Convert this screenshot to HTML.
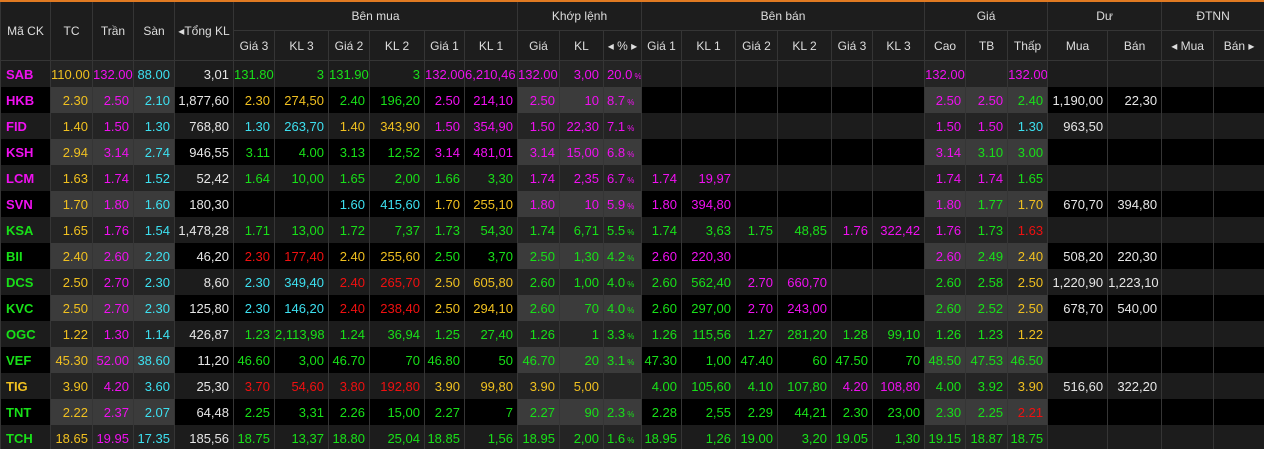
<!DOCTYPE html>
<html><head><meta charset="utf-8"><style>
html,body{margin:0;padding:0;background:#000;width:1264px;height:449px;overflow:hidden}
body{border-top:2px solid #e07a22;box-sizing:border-box}
table{border-collapse:collapse;table-layout:fixed;width:1264px;font-family:"Liberation Sans",sans-serif}
td,th{padding:0 4px 0 0;overflow:hidden;white-space:nowrap;border-left:1px solid #353535;border-right:1px solid #353535}
th{background:#1d1d1d;color:#ddd;font-weight:normal;font-size:12px;text-align:center;padding:0;border-bottom:1px solid #353535}
tr.h1 th{height:28px}tr.h2 th{height:29px}
td{height:26px;font-size:13px;text-align:right}
tr.o td{background:#1c1c1c}tr.e td{background:#000}
tr.o td.h{background:#242424}tr.e td.h{background:#3b3b3b}
td.n{text-align:left;padding-left:5px;font-weight:bold;font-size:13px}
td.p{text-align:left;padding-left:3px}
td.p small{font-size:8px}
.y{color:#f0c020}.m{color:#f010f0}.c{color:#3de0f0}.g{color:#18e018}.r{color:#f01010}.w{color:#e6e6e6}
</style></head><body>
<table>
<colgroup><col style="width:50px"><col style="width:42px"><col style="width:41px"><col style="width:41px"><col style="width:59px"><col style="width:41px"><col style="width:54px"><col style="width:41px"><col style="width:55px"><col style="width:40px"><col style="width:53px"><col style="width:42px"><col style="width:44px"><col style="width:38px"><col style="width:40px"><col style="width:54px"><col style="width:42px"><col style="width:54px"><col style="width:41px"><col style="width:52px"><col style="width:41px"><col style="width:42px"><col style="width:40px"><col style="width:60px"><col style="width:54px"><col style="width:52px"><col style="width:51px"></colgroup>
<tr class="h1"><th rowspan="2">Mã CK</th><th rowspan="2">TC</th><th rowspan="2">Trần</th><th rowspan="2">Sàn</th><th rowspan="2">◂Tổng KL</th><th colspan="6">Bên mua</th><th colspan="3">Khớp lệnh</th><th colspan="6">Bên bán</th><th colspan="3">Giá</th><th colspan="2">Dư</th><th colspan="2">ĐTNN</th></tr>
<tr class="h2"><th>Giá 3</th><th>KL 3</th><th>Giá 2</th><th>KL 2</th><th>Giá 1</th><th>KL 1</th><th>Giá</th><th>KL</th><th>◂ % ▸</th><th>Giá 1</th><th>KL 1</th><th>Giá 2</th><th>KL 2</th><th>Giá 3</th><th>KL 3</th><th>Cao</th><th>TB</th><th>Thấp</th><th>Mua</th><th>Bán</th><th>◂ Mua</th><th>Bán ▸</th></tr>
<tr class="o"><td class="n m">SAB</td><td class="h y">110.00</td><td class="h m">132.00</td><td class="h c">88.00</td><td class="w">3,01</td><td class="g">131.80</td><td class="g">3</td><td class="g">131.90</td><td class="g">3</td><td class="m">132.00</td><td class="m">6,210,46</td><td class="h m">132.00</td><td class="h m">3,00</td><td class="h p m">20.0<small> %</small></td><td></td><td></td><td></td><td></td><td></td><td></td><td class="h m">132.00</td><td class="h"></td><td class="h m">132.00</td><td></td><td></td><td></td><td></td></tr>
<tr class="e"><td class="n m">HKB</td><td class="h y">2.30</td><td class="h m">2.50</td><td class="h c">2.10</td><td class="w">1,877,60</td><td class="y">2.30</td><td class="y">274,50</td><td class="g">2.40</td><td class="g">196,20</td><td class="m">2.50</td><td class="m">214,10</td><td class="h m">2.50</td><td class="h m">10</td><td class="h p m">8.7<small> %</small></td><td></td><td></td><td></td><td></td><td></td><td></td><td class="h m">2.50</td><td class="h m">2.50</td><td class="h g">2.40</td><td class="w">1,190,00</td><td class="w">22,30</td><td></td><td></td></tr>
<tr class="o"><td class="n m">FID</td><td class="h y">1.40</td><td class="h m">1.50</td><td class="h c">1.30</td><td class="w">768,80</td><td class="c">1.30</td><td class="c">263,70</td><td class="y">1.40</td><td class="y">343,90</td><td class="m">1.50</td><td class="m">354,90</td><td class="h m">1.50</td><td class="h m">22,30</td><td class="h p m">7.1<small> %</small></td><td></td><td></td><td></td><td></td><td></td><td></td><td class="h m">1.50</td><td class="h m">1.50</td><td class="h c">1.30</td><td class="w">963,50</td><td></td><td></td><td></td></tr>
<tr class="e"><td class="n m">KSH</td><td class="h y">2.94</td><td class="h m">3.14</td><td class="h c">2.74</td><td class="w">946,55</td><td class="g">3.11</td><td class="g">4.00</td><td class="g">3.13</td><td class="g">12,52</td><td class="m">3.14</td><td class="m">481,01</td><td class="h m">3.14</td><td class="h m">15,00</td><td class="h p m">6.8<small> %</small></td><td></td><td></td><td></td><td></td><td></td><td></td><td class="h m">3.14</td><td class="h g">3.10</td><td class="h g">3.00</td><td></td><td></td><td></td><td></td></tr>
<tr class="o"><td class="n m">LCM</td><td class="h y">1.63</td><td class="h m">1.74</td><td class="h c">1.52</td><td class="w">52,42</td><td class="g">1.64</td><td class="g">10,00</td><td class="g">1.65</td><td class="g">2,00</td><td class="g">1.66</td><td class="g">3,30</td><td class="h m">1.74</td><td class="h m">2,35</td><td class="h p m">6.7<small> %</small></td><td class="m">1.74</td><td class="m">19,97</td><td></td><td></td><td></td><td></td><td class="h m">1.74</td><td class="h m">1.74</td><td class="h g">1.65</td><td></td><td></td><td></td><td></td></tr>
<tr class="e"><td class="n m">SVN</td><td class="h y">1.70</td><td class="h m">1.80</td><td class="h c">1.60</td><td class="w">180,30</td><td></td><td></td><td class="c">1.60</td><td class="c">415,60</td><td class="y">1.70</td><td class="y">255,10</td><td class="h m">1.80</td><td class="h m">10</td><td class="h p m">5.9<small> %</small></td><td class="m">1.80</td><td class="m">394,80</td><td></td><td></td><td></td><td></td><td class="h m">1.80</td><td class="h g">1.77</td><td class="h y">1.70</td><td class="w">670,70</td><td class="w">394,80</td><td></td><td></td></tr>
<tr class="o"><td class="n g">KSA</td><td class="h y">1.65</td><td class="h m">1.76</td><td class="h c">1.54</td><td class="w">1,478,28</td><td class="g">1.71</td><td class="g">13,00</td><td class="g">1.72</td><td class="g">7,37</td><td class="g">1.73</td><td class="g">54,30</td><td class="h g">1.74</td><td class="h g">6,71</td><td class="h p g">5.5<small> %</small></td><td class="g">1.74</td><td class="g">3,63</td><td class="g">1.75</td><td class="g">48,85</td><td class="m">1.76</td><td class="m">322,42</td><td class="h m">1.76</td><td class="h g">1.73</td><td class="h r">1.63</td><td></td><td></td><td></td><td></td></tr>
<tr class="e"><td class="n g">BII</td><td class="h y">2.40</td><td class="h m">2.60</td><td class="h c">2.20</td><td class="w">46,20</td><td class="r">2.30</td><td class="r">177,40</td><td class="y">2.40</td><td class="y">255,60</td><td class="g">2.50</td><td class="g">3,70</td><td class="h g">2.50</td><td class="h g">1,30</td><td class="h p g">4.2<small> %</small></td><td class="m">2.60</td><td class="m">220,30</td><td></td><td></td><td></td><td></td><td class="h m">2.60</td><td class="h g">2.49</td><td class="h y">2.40</td><td class="w">508,20</td><td class="w">220,30</td><td></td><td></td></tr>
<tr class="o"><td class="n g">DCS</td><td class="h y">2.50</td><td class="h m">2.70</td><td class="h c">2.30</td><td class="w">8,60</td><td class="c">2.30</td><td class="c">349,40</td><td class="r">2.40</td><td class="r">265,70</td><td class="y">2.50</td><td class="y">605,80</td><td class="h g">2.60</td><td class="h g">1,00</td><td class="h p g">4.0<small> %</small></td><td class="g">2.60</td><td class="g">562,40</td><td class="m">2.70</td><td class="m">660,70</td><td></td><td></td><td class="h g">2.60</td><td class="h g">2.58</td><td class="h y">2.50</td><td class="w">1,220,90</td><td class="w">1,223,10</td><td></td><td></td></tr>
<tr class="e"><td class="n g">KVC</td><td class="h y">2.50</td><td class="h m">2.70</td><td class="h c">2.30</td><td class="w">125,80</td><td class="c">2.30</td><td class="c">146,20</td><td class="r">2.40</td><td class="r">238,40</td><td class="y">2.50</td><td class="y">294,10</td><td class="h g">2.60</td><td class="h g">70</td><td class="h p g">4.0<small> %</small></td><td class="g">2.60</td><td class="g">297,00</td><td class="m">2.70</td><td class="m">243,00</td><td></td><td></td><td class="h g">2.60</td><td class="h g">2.52</td><td class="h y">2.50</td><td class="w">678,70</td><td class="w">540,00</td><td></td><td></td></tr>
<tr class="o"><td class="n g">OGC</td><td class="h y">1.22</td><td class="h m">1.30</td><td class="h c">1.14</td><td class="w">426,87</td><td class="g">1.23</td><td class="g">2,113,98</td><td class="g">1.24</td><td class="g">36,94</td><td class="g">1.25</td><td class="g">27,40</td><td class="h g">1.26</td><td class="h g">1</td><td class="h p g">3.3<small> %</small></td><td class="g">1.26</td><td class="g">115,56</td><td class="g">1.27</td><td class="g">281,20</td><td class="g">1.28</td><td class="g">99,10</td><td class="h g">1.26</td><td class="h g">1.23</td><td class="h y">1.22</td><td></td><td></td><td></td><td></td></tr>
<tr class="e"><td class="n g">VEF</td><td class="h y">45.30</td><td class="h m">52.00</td><td class="h c">38.60</td><td class="w">11,20</td><td class="g">46.60</td><td class="g">3,00</td><td class="g">46.70</td><td class="g">70</td><td class="g">46.80</td><td class="g">50</td><td class="h g">46.70</td><td class="h g">20</td><td class="h p g">3.1<small> %</small></td><td class="g">47.30</td><td class="g">1,00</td><td class="g">47.40</td><td class="g">60</td><td class="g">47.50</td><td class="g">70</td><td class="h g">48.50</td><td class="h g">47.53</td><td class="h g">46.50</td><td></td><td></td><td></td><td></td></tr>
<tr class="o"><td class="n y">TIG</td><td class="h y">3.90</td><td class="h m">4.20</td><td class="h c">3.60</td><td class="w">25,30</td><td class="r">3.70</td><td class="r">54,60</td><td class="r">3.80</td><td class="r">192,80</td><td class="y">3.90</td><td class="y">99,80</td><td class="h y">3.90</td><td class="h y">5,00</td><td class="h p"></td><td class="g">4.00</td><td class="g">105,60</td><td class="g">4.10</td><td class="g">107,80</td><td class="m">4.20</td><td class="m">108,80</td><td class="h g">4.00</td><td class="h g">3.92</td><td class="h y">3.90</td><td class="w">516,60</td><td class="w">322,20</td><td></td><td></td></tr>
<tr class="e"><td class="n g">TNT</td><td class="h y">2.22</td><td class="h m">2.37</td><td class="h c">2.07</td><td class="w">64,48</td><td class="g">2.25</td><td class="g">3,31</td><td class="g">2.26</td><td class="g">15,00</td><td class="g">2.27</td><td class="g">7</td><td class="h g">2.27</td><td class="h g">90</td><td class="h p g">2.3<small> %</small></td><td class="g">2.28</td><td class="g">2,55</td><td class="g">2.29</td><td class="g">44,21</td><td class="g">2.30</td><td class="g">23,00</td><td class="h g">2.30</td><td class="h g">2.25</td><td class="h r">2.21</td><td></td><td></td><td></td><td></td></tr>
<tr class="o"><td class="n g">TCH</td><td class="h y">18.65</td><td class="h m">19.95</td><td class="h c">17.35</td><td class="w">185,56</td><td class="g">18.75</td><td class="g">13,37</td><td class="g">18.80</td><td class="g">25,04</td><td class="g">18.85</td><td class="g">1,56</td><td class="h g">18.95</td><td class="h g">2,00</td><td class="h p g">1.6<small> %</small></td><td class="g">18.95</td><td class="g">1,26</td><td class="g">19.00</td><td class="g">3,20</td><td class="g">19.05</td><td class="g">1,30</td><td class="h g">19.15</td><td class="h g">18.87</td><td class="h g">18.75</td><td></td><td></td><td></td><td></td></tr>
</table>
</body></html>
